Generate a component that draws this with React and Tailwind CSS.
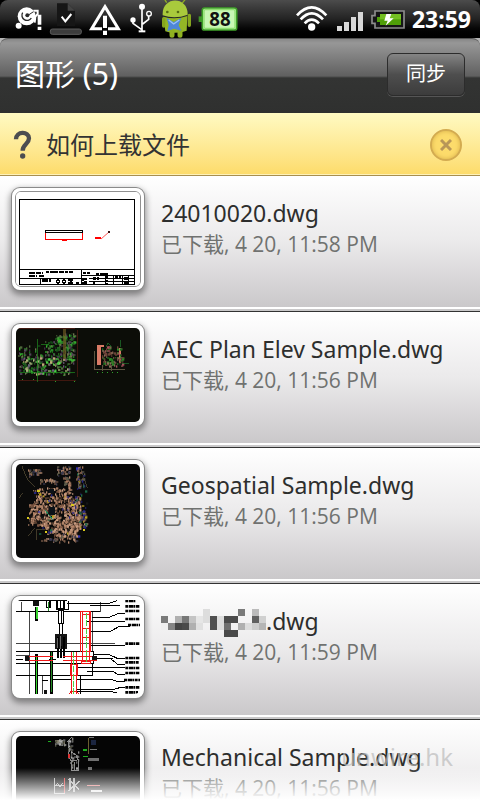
import React from 'react';

// Small seeded generator so the thumbnails look the same on every render
const scatter = (seed, count, boxes, colors) => {
  let s = seed * 7919;
  const next = () => {
    s = (s * 16807) % 2147483647;
    return s / 2147483647;
  };
  for (let i = 0; i < 5; i++) next();
  return Array.from({ length: count }, () => {
    const [x, y, w, h] = boxes[Math.floor(next() * boxes.length)];
    return {
      x: Math.round((x + next() * w) / 3) * 3,
      y: Math.round((y + next() * h) / 3) * 3,
      w: next() > 0.5 ? 7 : 4,
      h: next() > 0.5 ? 7 : 4,
      fill: colors[Math.floor(next() * colors.length)],
    };
  });
};

const Specks = ({ items }) => items.map((p, i) => (
  <rect key={i} x={p.x} y={p.y} width={p.w} height={p.h} fill={p.fill} shapeRendering="auto" />
));

const SheetThumb = () => (
  <svg viewBox="48 47 372 282" className="block w-full h-full bg-white" shapeRendering="crispEdges">
    <rect x="59" y="68" width="345" height="257" fill="none" stroke="#000" strokeWidth="3" />
    <path d="M59 280H404M59 307H244M244 280V325M244 298H404M268 307H404M268 316H404M121 307V325M316 298V325M340 298V325M368 298V325M386 298V325" stroke="#000" strokeWidth="3" fill="none" />
    <path d="M88 289H128M138 288H220M88 298H110M116 298H136M249 291H270M288 292H325" stroke="#000" strokeWidth="6" strokeDasharray="10 1 6 2" />
    <path d="M126 311H152M246 306V324M256 304V324M320 300V324M346 304H364M372 306H384M372 317H384M280 307H300M278 321H288" stroke="#000" strokeWidth="9" strokeDasharray="8 2" />
    <circle cx="174" cy="316" r="5" fill="none" stroke="#000" strokeWidth="4" />
    <circle cx="192" cy="316" r="5" fill="none" stroke="#000" strokeWidth="4" />
    <path d="M205 310H220M205 320H220M212 309V325M228 319H238" stroke="#000" strokeWidth="5" />
    <rect x="136" y="163" width="112" height="6" fill="none" stroke="#000" strokeWidth="3" />
    <path d="M136 170V188H248V170" fill="none" stroke="#f00" strokeWidth="3" />
    <path d="M186 192H201M286 185H304" stroke="#f00" strokeWidth="6" />
    <path d="M303 188L327 167" stroke="#f00" strokeWidth="2" shapeRendering="auto" />
    <rect x="323" y="164" width="6" height="6" fill="#311" />
  </svg>
);

const planGreen = scatter(7, 560, [[54, 105, 70, 85], [70, 130, 150, 60], [130, 90, 90, 60], [195, 65, 28, 70], [165, 75, 30, 20]], ['#1d6a1d', '#2a8a27', '#33b02e', '#16501a', '#4f6a3c', '#3d2f42', '#6f7350', '#0c1a0c', '#0c0d08', '#54425a']);
const planBright = scatter(21, 60, [[60, 140, 160, 50]], ['#46d043', '#a9b77a', '#6b5b7a', '#c0a878']);
const elevation = scatter(5, 100, [[306, 106, 60, 60]], ['#1d6a1d', '#a4505a', '#6d4538', '#2a8a27', '#1a1a14', '#8a6a58']);

const PlanThumb = () => (
  <svg viewBox="48 53 372 282" className="block w-full h-full bg-[#0c0d08]" shapeRendering="crispEdges">
    <path d="M48 55H226M232 60V200M54 211H228" stroke="#5a1c14" strokeWidth="2" />
    <Specks items={planGreen} />
    <Specks items={planBright} />
    <path d="M192 56V146" stroke="#6b5a22" strokeOpacity="0.7" strokeWidth="9" />
    <path d="M113 85V214M122 103H146M146 103L160 130M60 187H226" stroke="#1f8f1f" strokeWidth="2" fill="none" />
    <path d="M290 106H302V163H290ZM357 112H364V165H357Z" fill="#d97b66" />
    <path d="M290 108H312" stroke="#d97b66" strokeWidth="6" />
    <Specks items={elevation} />
    <path d="M284 122V178H374M308 165V182M334 165V182" stroke="#5d5540" strokeWidth="3" fill="none" />
    <path d="M360 90V110M366 160H386M318 110L324 98L334 110" stroke="#1f7a2f" strokeWidth="2" fill="none" />
    <path d="M290 187H354M66 207H80M100 207H112M166 213H170M222 213H226" stroke="#2ea32a" strokeWidth="3" strokeDasharray="3 12" />
  </svg>
);

const mapBase = scatter(33, 900, [[96, 122, 120, 100], [130, 150, 100, 110], [85, 175, 50, 60], [205, 150, 35, 110], [100, 125, 120, 90], [160, 220, 70, 50]], ['#b5866a', '#c99a7c', '#a87a60', '#c79c82', '#7a5440', '#b08468', '#5a4030', '#16110e']);
const mapEdge = scatter(12, 220, [[85, 65, 35, 22], [170, 58, 40, 30], [190, 90, 20, 25], [120, 96, 50, 14], [228, 60, 24, 60], [118, 274, 50, 12], [175, 260, 55, 25], [238, 190, 20, 50]], ['#a87a60', '#7a5a48', '#5a5a48', '#b58a70', '#3a3a50']);
const mapAccent = scatter(90, 80, [[100, 130, 140, 140], [225, 56, 32, 190]], ['#26268a', '#3434b0', '#b9a020', '#1d6a4a', '#151515', '#26267a']);

const MapThumb = () => (
  <svg viewBox="48 53 372 282" className="block w-full h-full bg-[#0a0a0a]" shapeRendering="crispEdges">
    <path d="M66 60L80 95L104 122M56 155L70 140M108 250V280M108 250H140M84 270L104 245M240 60L262 125" stroke="#5d5238" strokeWidth="2" fill="none" />
    <Specks items={mapBase} />
    <Specks items={mapEdge} />
    <Specks items={mapAccent} />
    <path d="M146 182H166V206H146ZM148 128H162V140H148Z" fill="#0c1218" />
    <path d="M112 134H119M136 256H142M82 214H88M250 250H256M214 176H222" stroke="#d8c81c" strokeWidth="6" />
    <path d="M134 190L160 222" stroke="#238a5a" strokeWidth="3" />
  </svg>
);

const SectionThumb = () => (
  <svg viewBox="48 53 372 282" className="block w-full h-full bg-white" shapeRendering="crispEdges">
    <path d="M88 88V335M48 182H168M198 182H346M48 220H88M126 280V335M278 88V208M64 58V88M300 58V88" stroke="#444" strokeWidth="3" fill="none" />
    <path d="M48 55H200M48 88H300M48 208H280V244M48 244H278V280H48M204 55V80H168V55M148 232H168M126 294H145M160 290H212M230 290H330M232 320H346M242 280V335M48 232H70M232 256H346M280 216H326M290 228H340M260 266H336" stroke="#000" strokeWidth="3" fill="none" />
    <path d="M200 62H330L350 55M270 70H340L360 70M276 104H330L356 93H376M262 118H340L376 116M268 148H330L358 132H390M272 190H376M326 216L352 228H376M330 228L352 245H376M346 256H376M336 266L352 275H376M330 290L350 297H376M346 320L362 315H376M232 328H330L350 330" stroke="#000" strokeWidth="3" fill="none" />
    <path d="M376 56H408M376 72H420M376 86H420M376 110H420M384 128H420M376 184H420M376 227H420M376 240H416M376 257H420M376 272H420M372 293H420M376 315H420M376 330H414" stroke="#000" strokeWidth="8" strokeDasharray="9 2 13 1 5 2" shapeRendering="auto" />
    <path d="M176 84H190V124H176ZM172 55H192V80H172ZM140 55H150V75H140Z" fill="#fff" stroke="#000" strokeWidth="4" />
    <path d="M98 57H118V71H98Z" fill="#111" />
    <path d="M182 55V80M184 84V124M178 124V154M188 124V154M145 70V88" stroke="#000" strokeWidth="3" />
    <path d="M166 154H200V200H166Z" fill="#151515" />
    <path d="M175 165V228M191 165V228M184 190V228" stroke="#000" strokeWidth="6" />
    <path d="M181 160V200M172 168V196" stroke="#999" strokeWidth="2" />
    <path d="M110 74V116M109 214V335M154 208V335" stroke="#000" strokeWidth="10" />
    <path d="M110 74V110M109 222V335" stroke="#35d32c" strokeWidth="5" />
    <path d="M145 58V86M154 210V330" stroke="#248a24" strokeWidth="3" />
    <path d="M240 88H274M248 88V240M268 88V240M242 88V208M272 88V208M246 97H270M246 138H270M246 166H270M246 206H270M244 236H270V243H244ZM86 222H160M86 234H160M190 222H290M190 234H290M214 208V335M228 208V335M210 245H232V278H210ZM208 335L214 326H228L236 335" stroke="#f01818" strokeWidth="3" fill="none" />
    <path d="M258 92V240M221 208V335" stroke="#4cd544" strokeWidth="3" strokeDasharray="18 4" />
    <path d="M76 222H88V236H76ZM276 222H292V234H276ZM133 322H142V335H133Z" fill="#111" />
  </svg>
);

const machineBits = scatter(44, 60, [[164, 62, 28, 16], [203, 56, 14, 60], [210, 100, 24, 50]], ['#666', '#8a8a8a', '#443', '#aaa', '#554']);

const MachineThumb = () => (
  <svg viewBox="48 53 372 282" className="block w-full h-full bg-[#050505]" shapeRendering="crispEdges">
    <path d="M164 66H196V78H172Z" fill="#8f8a78" />
    <Specks items={machineBits} />
    <path d="M216 56L204 70L208 96L204 116L218 132M214 155V128L236 124V155ZM224 130V155M212 98L228 110L236 130" stroke="#8a8a8a" strokeWidth="3" fill="none" />
    <path d="M266 58V108" stroke="#6a5f30" strokeWidth="3" />
    <path d="M266 57H282M270 92H290" stroke="#777" strokeWidth="3" />
    <path d="M274 66H288V80H274Z" fill="#1b2540" />
    <path d="M265 118H296V128H265ZM265 147H277V154H265Z" fill="#6f6f6f" />
    <path d="M144 70H152M248 95H262M250 115H264" stroke="#1fae1f" strokeWidth="4" />
    <path d="M203 108H209V118H203Z" fill="#d33" />
    <path d="M164 180V224H194V180M164 200H194M164 204L172 195L180 204L188 195" stroke="#aaa" strokeWidth="3" fill="none" />
    <path d="M193 178V224" stroke="#d33" strokeWidth="3" />
    <path d="M206 182L238 216M238 188L206 218M210 180V216M222 180V220" stroke="#aaa" strokeWidth="4" />
    <path d="M262 201H300" stroke="#d66" strokeWidth="5" />
    <path d="M274 218H306" stroke="#ddd" strokeWidth="5" />
  </svg>
);

// Pixelated part of a hidden file name: [column, row, colour]
const mosaic = [
  [6, 0, '#dddddd'], [11, 0, '#7a7a7a'], [13, 0, '#bbbbbb'],
  [0, 1, '#7a7a7a'], [2, 1, '#b0b0b0'], [3, 1, '#777777'], [4, 1, '#c4c4c4'], [5, 1, '#e6e6e6'], [6, 1, '#dddddd'], [7, 1, '#505050'], [8, 1, '#dddddd'], [9, 1, '#4c4c4c'], [10, 1, '#4c4c4c'], [13, 1, '#606060'], [14, 1, '#d0d0d0'],
  [0, 2, '#eeeeee'], [1, 2, '#858585'], [2, 2, '#444444'], [3, 2, '#4a4a4a'], [4, 2, '#b0b0b0'], [5, 2, '#e0e0e0'], [7, 2, '#505050'], [8, 2, '#dddddd'], [9, 2, '#707070'], [11, 2, '#b0b0b0'], [12, 2, '#dddddd'], [13, 2, '#cccccc'], [14, 2, '#b5b5b5'],
  [9, 3, '#4a4a4a'], [10, 3, '#4a4a4a'],
];

const Mosaic = () => (
  <svg viewBox="0 0 15 4" className="w-[105px] h-7 mt-1 shrink-0" shapeRendering="crispEdges">
    {mosaic.map(([x, y, fill]) => (
      <rect key={`${x}-${y}`} x={x} y={y} width="1" height="1" fill={fill} />
    ))}
  </svg>
);

const drawings = [
  { name: '24010020.dwg', status: '已下载, 4 20, 11:58 PM', Thumb: SheetThumb, sheet: true },
  { name: 'AEC Plan Elev Sample.dwg', status: '已下载, 4 20, 11:56 PM', Thumb: PlanThumb },
  { name: 'Geospatial Sample.dwg', status: '已下载, 4 20, 11:56 PM', Thumb: MapThumb },
  { name: '.dwg', hidden: true, status: '已下载, 4 20, 11:59 PM', Thumb: SectionThumb },
  { name: 'Mechanical Sample.dwg', status: '已下载, 4 20, 11:56 PM', Thumb: MachineThumb },
];

const StatusBar = () => (
  <div className="h-[38px] shrink-0 flex items-center pl-[14px] pr-[9px] bg-linear-to-b from-[#4c4c4c] via-[#232323] to-black rounded-t-lg">
    <svg viewBox="42 0 90 114" className="w-[30px] h-[38px] shrink-0">
      <circle cx="80" cy="49" r="27" fill="#fff" />
      <circle cx="56" cy="77" r="9" fill="#fff" />
      <path d="M68 38A15 15 0 1 0 94 54" fill="none" stroke="#2a2a2a" strokeWidth="4" />
      <circle cx="82" cy="46" r="6" fill="#2a2a2a" />
      <path d="M84 46L102 34" stroke="#2a2a2a" strokeWidth="3" />
      <path d="M100 32H113V42L106 50L104 68" fill="none" stroke="#fff" strokeWidth="6" />
      <path d="M113 44H124V74H113ZM113 80H124V90H113Z" fill="#fff" />
    </svg>
    <svg viewBox="144 0 108 114" className="ml-1 w-9 h-[38px] shrink-0">
      <path d="M171 10H203L225 32V78H171Z" fill="#161616" />
      <path d="M203 10V32H225Z" fill="#444" />
      <path d="M185 50L196 64L214 42" fill="none" stroke="#fff" strokeWidth="6" />
      <rect x="151" y="87" width="93" height="16" rx="6" fill="#3c3c3c" stroke="#5c5c5c" strokeWidth="3" />
    </svg>
    <svg viewBox="258 0 114 114" className="ml-[2px] w-[38px] h-[38px] shrink-0">
      <path d="M306 86H275L315 20L355 86H324" fill="none" stroke="#fff" strokeWidth="9" />
      <path d="M309 47H321V84H309ZM309 92H321V105H309Z" fill="#fff" />
    </svg>
    <svg viewBox="384 0 78 114" className="ml-1 w-[26px] h-[38px] shrink-0">
      <path d="M426 18V94M399 60V70L424 88M446 48V58L428 72" fill="none" stroke="#fff" strokeWidth="5" />
      <path d="M416 91H436V97H416Z" fill="#fff" />
      <circle cx="426" cy="20" r="9" fill="#fff" />
      <circle cx="399" cy="60" r="8" fill="#fff" />
      <circle cx="447" cy="41" r="7" fill="none" stroke="#fff" strokeWidth="4" />
    </svg>
    <svg viewBox="480 0 96 114" className="ml-[6px] w-8 h-[38px] shrink-0">
      <path d="M500 8L494 -2M546 10L556 -2" stroke="#8fae22" strokeWidth="4" />
      <path d="M488 46C484 -12 564 -14 563 44Q526 58 488 46Z" fill="#a9ca3c" />
      <path d="M490 50Q526 60 562 48L560 92Q526 104 496 94Z" fill="#93b626" />
      <path d="M491 56V78M568 46V76" stroke="#86a61e" strokeWidth="10" strokeLinecap="round" />
      <path d="M516 94V106M540 94V106" stroke="#8fb221" strokeWidth="15" strokeLinecap="round" />
      <circle cx="502" cy="36" r="4" fill="#566a12" />
      <circle cx="534" cy="36" r="4" fill="#566a12" />
      <path d="M500 54L521 66L544 54L536 76L544 92L521 86L502 94L506 76Z" fill="#4e86d8" />
      <path d="M506 60L521 72L538 60" fill="none" stroke="#9cc4f5" strokeWidth="4" />
    </svg>
    <svg viewBox="594 0 120 114" className="ml-[6px] w-10 h-[38px] shrink-0">
      <path d="M596 49H608V66H596Z" fill="#3f9428" />
      <rect x="607" y="24" width="103" height="66" rx="7" fill="#c9f7b4" stroke="#3fa128" strokeWidth="5" />
      <rect x="612" y="29" width="93" height="56" rx="4" fill="none" stroke="#8fe070" strokeWidth="4" />
      <text x="660" y="77" textAnchor="middle" fontSize="56" className="font-bold font-['Noto_Sans',sans-serif] fill-[#111]">88</text>
    </svg>
    <svg viewBox="162 0 102 114" className="ml-auto w-[34px] h-[38px] shrink-0">
      <circle cx="212" cy="81" r="11" fill="#fff" />
      <path d="M168 46Q212 -2 256 46M179 58Q212 22 246 58M191 70Q212 48 234 70" fill="none" stroke="#fff" strokeWidth="8" />
    </svg>
    <svg viewBox="285 0 84 114" className="ml-[7px] w-7 h-[38px] shrink-0">
      <path d="M288 78H303V93H288ZM309 66H324V93H309ZM330 51H345V93H330ZM351 36H366V93H351Z" fill="#d8d8d8" />
    </svg>
    <svg viewBox="387 0 108 114" className="ml-[6px] w-9 h-[38px] shrink-0">
      <path d="M402 33H489V84H402V70H393V47H402Z" fill="#151515" stroke="#8c8c8c" strokeWidth="5" />
      <path d="M417 42H480V75H417V66H408V51H417Z" fill="#4f9f08" />
      <path d="M417 42H480V58H417Z" fill="#74bf22" />
      <path d="M436 42H451L446 55H458L434 77L440 62H430Z" fill="#fff" />
    </svg>
    <span className="ml-[6px] text-[23px] leading-none font-bold text-white">23:59</span>
  </div>
);

const TitleBar = () => (
  <div className="bg-[#b5b5b5] shrink-0">
    <header className="h-[75px] flex items-center justify-between px-[15px] pb-1 rounded-t-lg border-t border-[#555] bg-[linear-gradient(to_bottom,#878787_0px,#979797_4px,#606060_37px,#333433_39px,#2f302f_75px)]">
      <h1 className="text-[30px] leading-none text-white">图形 (5)</h1>
      <button className="w-[78px] h-[43px] rounded-md border border-[#2c2c2c] text-xl text-white shadow-[0_1px_0_#555] bg-linear-to-b from-[#858585] via-[#4e4e4e] to-[#3c3c3c] cursor-pointer">
        同步
      </button>
    </header>
  </div>
);

const HelpBar = () => (
  <div className="h-[62px] shrink-0 flex items-center pl-[13px] pr-[18px] pt-[2px] bg-linear-to-b from-[#fffac2] to-[#fddb69] shadow-[inset_0_-1px_0_#fff2b8]">
    <svg viewBox="40 280 60 90" className="w-5 h-[30px] shrink-0">
      <path d="M49 308C49 283 88 283 88 305C88 322 69 322 69 342" fill="none" stroke="#4c4d50" strokeWidth="13" />
      <circle cx="69" cy="358" r="8" fill="#4c4d50" />
    </svg>
    <a href="#upload" className="ml-[13px] flex-1 text-2xl leading-none text-[#333]">如何上载文件</a>
    <button aria-label="关闭" className="w-8 h-8 rounded-full border-2 border-[#d3ab50] bg-[#fcdb6b] shadow-[inset_0_0_4px_#d9b04a] flex items-center justify-center cursor-pointer">
      <svg viewBox="0 0 12 12" className="w-3 h-3">
        <path d="M1 1L11 11M11 1L1 11" stroke="#b89658" strokeWidth="3" />
      </svg>
    </button>
  </div>
);

const DrawingRow = ({ name, hidden, status, Thumb, sheet }) => (
  <li className="border-t border-[#333] first:border-[#a98f4e]">
    <div className="h-[131px] flex items-start pt-3 px-3 bg-linear-to-b from-white via-[#ebeaeb] to-[#cac8ca]">
      <div className="w-[132px] h-[102px] shrink-0 rounded-lg border-3 border-white bg-white overflow-hidden shadow-[0_0_0_1px_#8a8a8a,0_3px_6px_2px_rgba(0,0,0,0.4)]">
        <div className={sheet ? 'w-full h-full rounded-md overflow-hidden border border-[#909090]' : 'w-full h-full rounded-md overflow-hidden border border-white'}>
          <Thumb />
        </div>
      </div>
      <div className="ml-[17px] pt-[9px] min-w-0">
        <h2 className="h-8 flex items-center text-[23px] leading-8 text-[#2d2e2d] whitespace-nowrap">
          {hidden && <Mosaic />}
          {name}
        </h2>
        <p className="text-[21px] leading-[30px] text-[#707270] whitespace-nowrap font-['Open_Sans','Noto_Sans_CJK_SC',sans-serif]">{status}</p>
      </div>
    </div>
    <div className="h-1 border-t-2 border-white bg-[#c9c8c9]" />
  </li>
);

const App = () => (
  <div className="relative h-screen flex flex-col overflow-hidden bg-black font-['Noto_Sans','Noto_Sans_CJK_SC',sans-serif]">
    <StatusBar />
    <TitleBar />
    <HelpBar />
    <ul className="flex-1 min-h-0 overflow-hidden bg-white">
      {drawings.map((d, i) => (
        <DrawingRow key={i} {...d} />
      ))}
    </ul>
    <div className="absolute inset-x-0 bottom-0 h-8 bg-linear-to-b from-white/0 to-white pointer-events-none" />
    <span className="absolute right-[27px] bottom-[27px] text-2xl leading-8 text-[#bbb]/70 pointer-events-none">unwire.hk</span>
  </div>
);

export default App;
